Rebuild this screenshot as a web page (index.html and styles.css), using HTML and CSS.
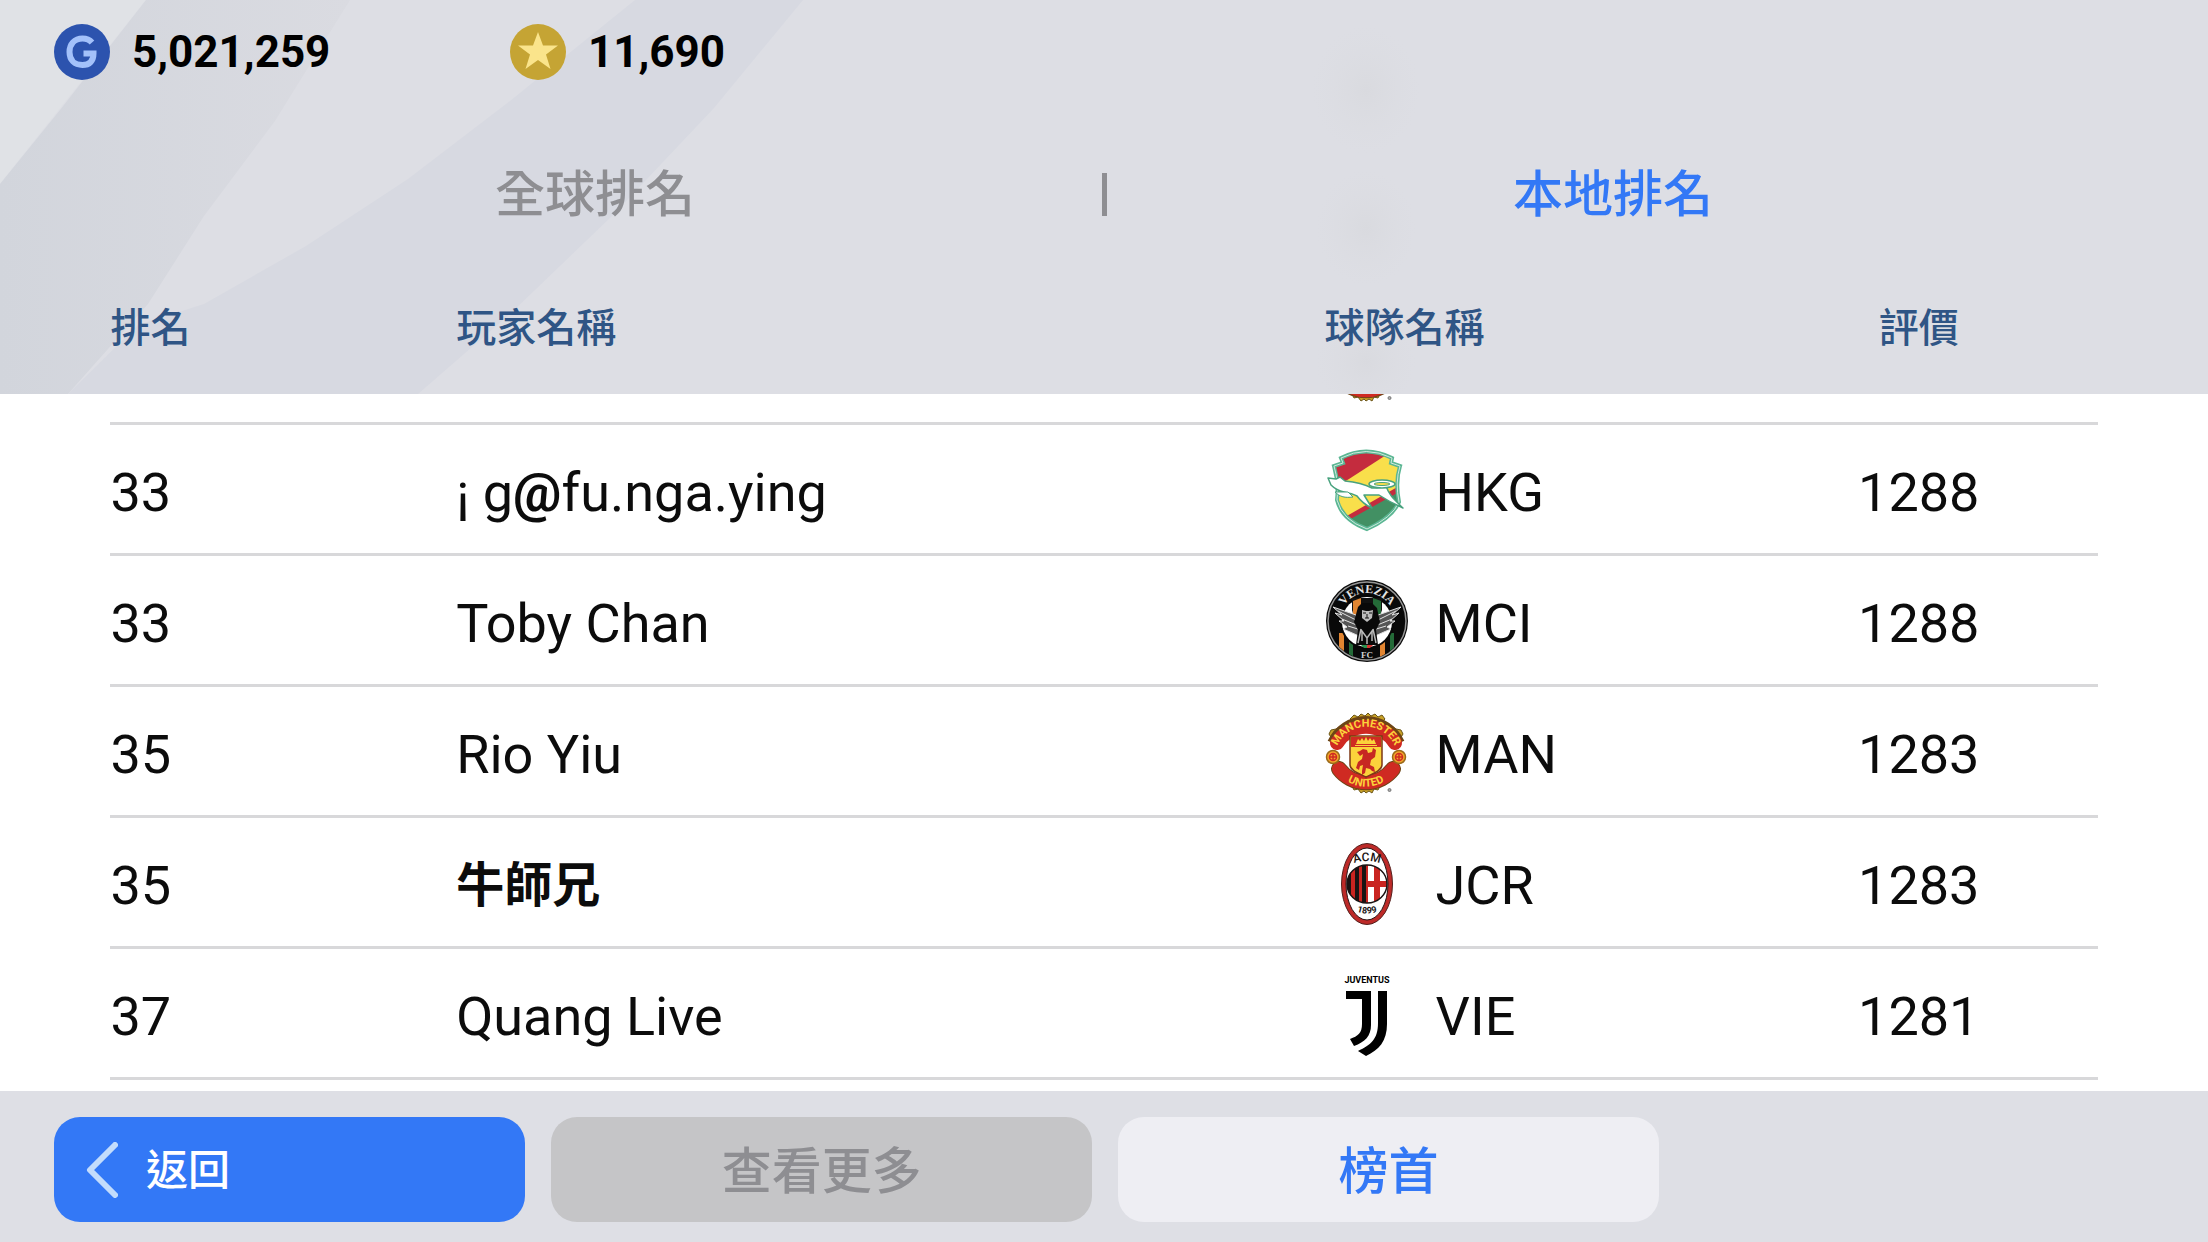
FILE: index.html
```html
<!DOCTYPE html>
<html lang="zh-Hant">

<head>
    <meta charset="utf-8">
    <meta name="viewport" content="width=device-width, initial-scale=1">
    <title>本地排名</title>
    <link rel="stylesheet" href="styles.css">
</head>

<body>
    <svg class="backdrop" viewBox="0 0 2208 394" preserveAspectRatio="xMinYMin slice" aria-hidden="true">
        <defs>
            <linearGradient id="band" x1="0" y1="0" x2="1" y2="0">
                <stop offset="0" stop-color="#d2d5dc" />
                <stop offset="1" stop-color="#dadbe1" />
            </linearGradient>
            <radialGradient id="ghost">
                <stop offset="0" stop-color="#d5d6da" stop-opacity=".5" />
                <stop offset="1" stop-color="#dadbdf" stop-opacity="0" />
            </radialGradient>
        </defs>
        <path fill="#dddee4" d="M0 0h2208v394H0z" />
        <path fill="#e0e2e6" d="M0 0h146L0 184z" />
        <path fill="url(#band)" d="M146 0H350L275 121 204 216 148 304 68 394H0V184L60 110z" />
        <path fill="#d7d9e1" d="M635 0H803L714 108 612 216 510 314 418 394H68L138 325 204 304 306 246 408 179 510 101z" />
        <ellipse cx="1366" cy="90" rx="54" ry="64" fill="url(#ghost)" />
        <ellipse cx="1366" cy="228" rx="50" ry="58" fill="url(#ghost)" />
        <ellipse cx="1366" cy="362" rx="50" ry="50" fill="url(#ghost)" />
    </svg>

    <svg class="sprites" aria-hidden="true">
        <symbol id="crest-united" viewBox="0 0 84 84">
            <g fill="#c9a227" stroke="#6b5518">
                <path d="M25 9l4-4 4 2 3-3 4 2 3-3 3 3 4-2 3 3 4-2 3 4-4 4H29z" />
                <path d="M4 24l2-4 5-1 3-2-1 6-6 6zM78 24l-2-4-5-1-3-2 1 6 6 6z" />
                <path d="M26 74l3 6 4-1 3 4 3-2 2 2 3-2 3 2 2-4 4 1 3-6z" />
            </g>
            <path fill="#fff" d="M41 12a30 30 0 1 0 .1 0z" />
            <path fill="none" stroke="#6d4515" stroke-width="16" d="M10 34A34 34 0 0 1 72 34" />
            <path fill="none" stroke="#cf2a22" stroke-width="14" stroke-linecap="round" d="M12 33A34 34 0 0 1 70 33" />
            <path fill="none" stroke="#6d4515" stroke-width="16" stroke-linecap="round" d="M14 59A34 34 0 0 0 68 59" />
            <path fill="none" stroke="#cf2a22" stroke-width="14" stroke-linecap="round" d="M14 59A34 34 0 0 0 68 59" />
            <g stroke="#9b6a1a" stroke-width="1.5" fill="#f4a52c">
                <circle cx="8" cy="47" r="6.5" />
                <circle cx="74" cy="47" r="6.5" />
            </g>
            <g fill="none" stroke="#cf2a22" stroke-width="1.5">
                <circle cx="8" cy="47" r="3.5" />
                <circle cx="74" cy="47" r="3.5" />
                <path d="M5 47h6M71 47h6M8 44v6M74 44v6" />
            </g>
            <path fill="#fbd33b" stroke="#7d3916" stroke-width="1.5" d="M25 26h32v29c0 5-8 8-16 12-8-4-16-7-16-12z" />
            <path fill="#cf2a22" d="M26 27h30v10H26z" />
            <path fill="#fbd33b" d="M31 34l2-5 2 2 2-3 2 3 2-4 2 4 2-3 2 3 2-2 2 5zM30 35h22v1H30z" />
            <path fill="#c72822" d="M35 41l3-2 4 1 1 3 4-1 1-4 3 2-1 7-4 3-1 5 4 2 1 5-3-1-2-2-4-1-1 5-3 2 0-4 1-6-3 1-1 4-3-2 2-6 4-3 1-5-3 2-3-4z" />
            <circle cx="64.5" cy="80" r="1.5" fill="#aaa" stroke="#777" />
        </symbol>
    </svg>

    <header class="header">
        <div class="wallet">
            <div class="balance">
                <svg class="coin" viewBox="0 0 56 56" role="img" aria-label="GP">
                    <circle cx="28" cy="28" r="28" fill="#2c53ae" />
                    <path fill="none" stroke="#a3c1fa" stroke-width="6" d="M38 18.5C35 15 32 14.500 28.500 14.500C20.500 14.500 15.500 20 15.500 28S20.500 41 28.500 41C35.500 41 39.500 37 39.500 29.500H29.500" />
                </svg>
                <span>5,021,259</span>
            </div>
            <div class="balance">
                <svg class="coin" viewBox="0 0 56 56" role="img" aria-label="Coins">
                    <circle cx="28" cy="28" r="28" fill="#c5a434" />
                    <path fill="#fae48b" d="M28 8l5 13.500h15L36 30.500 40.500 45 28 36 15.500 45 20 30.500 8 21.500h15z" />
                </svg>
                <span>11,690</span>
            </div>
        </div>
        <nav class="tabs">
            <button class="tab" type="button">全球排名</button>
            <span class="tab-divider"></span>
            <button class="tab tab--active" type="button" aria-current="true">本地排名</button>
        </nav>
    </header>

    <main class="ranking">
        <table class="ranking-table">
            <thead>
                <tr>
                    <th class="col-rank" scope="col">排名</th>
                    <th class="col-player" scope="col">玩家名稱</th>
                    <th class="col-team" scope="col">球隊名稱</th>
                    <th class="col-rating" scope="col">評價</th>
                </tr>
            </thead>
            <tbody>
                <!-- row scrolled almost out of view under the header -->
                <tr class="row-peek">
                    <td></td>
                    <td></td>
                    <td>
                        <div class="peek"><svg class="crest"><use href="#crest-united" /></svg></div>
                    </td>
                    <td></td>
                </tr>
                <tr>
                    <td>33</td>
                    <td>¡ g<b>@</b>fu.nga.ying</td>
                    <td>
                        <div class="team">
                            <svg class="crest" viewBox="0 0 84 84" aria-hidden="true">
                                <defs>
                                    <clipPath id="shield">
                                        <path d="M16 10Q41 -3 67 10L66 15 75 18Q70 34 74 54Q67 70 42 81Q17 72 12 52Q14 35 9 18L18 15z" />
                                    </clipPath>
                                </defs>
                                <g clip-path="url(#shield)">
                                    <path fill="#f9df4b" d="M0 0h84v84H0z" />
                                    <path fill="#c42c3e" d="M0 0h72L24 31 0 45z" />
                                    <path fill="#c42c3e" d="M20 69L76 37v8L24 76z" />
                                    <path fill="#429063" d="M20 74L76 43v41H20z" />
                                </g>
                                <path fill="none" stroke="#5bb693" stroke-width="4" d="M16 10Q41 -3 67 10L66 15 75 18Q70 34 74 54Q67 70 42 81Q17 72 12 52Q14 35 9 18L18 15z" />
                                <path fill="none" stroke="#cfeadd" d="M16 10Q41 -3 67 10L66 15 75 18Q70 34 74 54Q67 70 42 81Q17 72 12 52Q14 35 9 18L18 15z" />
                                <path fill="#fff" stroke="#48a27e" stroke-width="1.5" stroke-linejoin="round" d="M3 30l8 1 4-2 5 4c10 1 19 3 27 7 6 0 10 0 14-2 3 9 8 13 17 22-9-4-18-9-24-13l-15 0 8 13c-7-3-12-8-15-12-4-2-8-3-13-4-5-1-9-3-13-7z" />
                                <ellipse cx="57" cy="36" rx="13" ry="4" fill="#fff" stroke="#48a27e" stroke-width="1.5" />
                                <ellipse cx="57" cy="36" rx="8" ry="1.5" fill="#f9df4b" stroke="#48a27e" />
                                <path fill="#fff" stroke="#48a27e" d="M10 44c5 5 10 6 18 5l-5-5z" />
                            </svg>
                            <span>HKG</span>
                        </div>
                    </td>
                    <td>1288</td>
                </tr>
                <tr>
                    <td>33</td>
                    <td>Toby Chan</td>
                    <td>
                        <div class="team">
                            <svg class="crest" viewBox="0 0 84 84" aria-hidden="true">
                                <defs>
                                    <clipPath id="disc">
                                        <circle cx="42" cy="42" r="38" />
                                    </clipPath>
                                    <path id="arc-venezia" d="M15 41A27 27 0 0 1 69 41" />
                                </defs>
                                <circle cx="42" cy="42" r="41" fill="#090909" />
                                <circle cx="42" cy="42" r="39" fill="none" stroke="#969696" stroke-width="1.5" />
                                <g clip-path="url(#disc)">
                                    <path fill="#e18531" d="M14 54h5v28h-5zM55 56h5v26h-5z" />
                                    <path fill="#246b38" d="M24 60h4v22h-4zM65 54h4v28h-4z" />
                                </g>
                                <circle cx="42" cy="43" r="27" fill="#070707" />
                                <circle cx="42" cy="43" r="25" fill="#fff" />
                                <path fill="#111" d="M27 19h30v12l-4 12-10 13-13-14-3-11z" />
                                <path fill="#e18531" d="M28 22l8-3v20h-8z" />
                                <path fill="#246b38" d="M48 19l8 3v17h-8z" />
                                <g fill="#555" stroke="#e2e2e2">
                                    <path d="M8 28l23 8 6 12-3 9-9-4-7-3 4-2-8-6 5 0-9-8 7 2z" />
                                    <path d="M76 28l-23 8-6 12 3 9 9-4 7-3-4-2 8-6-5 0 9-8-7 2z" />
                                    <path d="M13 32l20 10M17 40l17 7M23 47l13 4M71 32L51 42M67 40l-17 7M61 47l-13 4" />
                                </g>
                                <path fill="#090909" d="M33 28l4-4h10l5 5 3 14-4 8 2 15H31l2-15-4-8z" />
                                <path fill="#bcbcbc" d="M37 31l4 1h3l4-1-1 8-5 4-5-4z" />
                                <path stroke="#111" fill="none" d="M38 34h3M44 34h3M40 39h4M42 35v4" />
                                <path stroke="#b9b9b9" fill="none" stroke-width="1.5" d="M33 64l3-14M51 64l-3-14M37 62V52l5 7 5-7v10M42 59v6" />
                                <path fill="#d53732" d="M42 66h6l-3 3h-3z" />
                                <path fill="#2c9250" d="M36 66h6v3h-3z" />
                                <text class="crest-text crest-text--serif">
                                    <textPath href="#arc-venezia" startOffset="50%" text-anchor="middle">VENEZIA</textPath>
                                </text>
                                <text class="crest-text crest-text--club" x="42" y="79" text-anchor="middle">FC</text>
                            </svg>
                            <span>MCI</span>
                        </div>
                    </td>
                    <td>1288</td>
                </tr>
                <tr>
                    <td>35</td>
                    <td>Rio Yiu</td>
                    <td>
                        <div class="team">
                            <svg class="crest" viewBox="0 0 84 84" aria-hidden="true">
                                <use href="#crest-united" width="84" height="84" />
                                <path id="arc-manchester" fill="none" d="M11 40A31 31 0 0 1 71 40" />
                                <path id="arc-united" fill="none" d="M12 62A36 36 0 0 0 70 62" />
                                <text class="crest-text crest-text--gold">
                                    <textPath href="#arc-manchester" startOffset="50%" text-anchor="middle">MANCHESTER</textPath>
                                </text>
                                <text class="crest-text crest-text--gold">
                                    <textPath href="#arc-united" startOffset="50%" text-anchor="middle">UNITED</textPath>
                                </text>
                            </svg>
                            <span>MAN</span>
                        </div>
                    </td>
                    <td>1283</td>
                </tr>
                <tr>
                    <td>35</td>
                    <td class="name-han">牛師兄</td>
                    <td>
                        <div class="team">
                            <svg class="crest" viewBox="0 0 84 84" aria-hidden="true">
                                <defs>
                                    <clipPath id="inner">
                                        <ellipse cx="42" cy="43" rx="20" ry="19" />
                                    </clipPath>
                                </defs>
                                <ellipse cx="42" cy="43" rx="25.5" ry="40.5" fill="#bd2a28" stroke="#54201d" />
                                <ellipse cx="42" cy="43" rx="21" ry="36" fill="#fff" stroke="#2b1616" />
                                <g clip-path="url(#inner)">
                                    <path fill="#c92420" d="M20 22h44v44H20z" />
                                    <path fill="#191313" d="M22 22h4v44h-4zM30 22h4v44h-4zM37 22h4v44h-4z" />
                                    <path fill="#fff" d="M43 22h21v44H43z" />
                                    <path fill="#c92420" d="M49 22h6v44h-6zM43 40h21v6H43z" />
                                </g>
                                <ellipse cx="42" cy="43" rx="20" ry="19" fill="none" stroke="#1b1414" stroke-width="1.5" />
                                <path id="arc-acm" fill="none" d="M25 24Q42 16 59 24" />
                                <path id="arc-year" fill="none" d="M24 67Q42 78 60 67" />
                                <text class="crest-text crest-text--acm">
                                    <textPath href="#arc-acm" startOffset="50%" text-anchor="middle">ACM</textPath>
                                </text>
                                <text class="crest-text crest-text--year">
                                    <textPath href="#arc-year" startOffset="50%" text-anchor="middle">1899</textPath>
                                </text>
                            </svg>
                            <span>JCR</span>
                        </div>
                    </td>
                    <td>1283</td>
                </tr>
                <tr>
                    <td>37</td>
                    <td>Quang Live</td>
                    <td>
                        <div class="team">
                            <svg class="crest" viewBox="0 0 84 84" aria-hidden="true">
                                <text class="crest-text crest-text--juve" x="42" y="11" text-anchor="middle">JUVENTUS</text>
                                <path d="M21 19h25v34c0 11-6 17-17 21l-4-7c8-3 12-6 12-15V27H21z" />
                                <path d="M53 19h9v33c0 17-8 26-21 32l-8-5c13-6 20-12 20-28z" />
                            </svg>
                            <span>VIE</span>
                        </div>
                    </td>
                    <td>1281</td>
                </tr>
            </tbody>
        </table>
    </main>

    <footer class="footer">
        <button class="btn btn--back" type="button">
            <svg class="chevron" viewBox="0 0 32 56" aria-hidden="true">
                <path d="M29 3L4 28l25 25" />
            </svg>
            <span>返回</span>
        </button>
        <button class="btn btn--more" type="button" disabled>查看更多</button>
        <button class="btn btn--top" type="button">榜首</button>
    </footer>
</body>

</html>
```
FILE: styles.css
```css
:root {
    --blue: #3378f6;
    --navy: #2f5585;
    --grey: #8e8e92;
    --panel: #dedfe5;
    --line: #d8d8da;
}

* {
    box-sizing: border-box;
}

body {
    margin: 0;
    min-height: 100vh;
    display: flex;
    flex-direction: column;
    background: var(--panel);
    color: #0c0c0c;
    font-family: Roboto, "Noto Sans CJK TC", sans-serif;
}

button {
    border: 0;
    background: none;
    font-family: inherit;
    font-size: 50px;
    font-weight: 500;
    cursor: pointer;
}

.backdrop {
    position: absolute;
    top: 0;
    left: 0;
    width: 100%;
    height: 394px;
    z-index: -1;
}

.sprites {
    position: absolute;
    width: 0;
    height: 0;
}

/* header */

.wallet {
    display: flex;
    padding: 24px 54px 0;
}

.balance {
    display: flex;
    align-items: center;
    gap: 22px;
    width: 456px;
    color: #000;
    font-size: 44px;
    font-weight: 700;
    line-height: 56px;
}

.coin {
    width: 56px;
    height: 56px;
}

.tabs {
    display: flex;
    align-items: center;
    height: 140px;
    margin: 44px 0 26px;
    padding: 0 4%;
}

.tab {
    flex: 1;
    height: 100%;
    padding: 0 0 8px;
    color: var(--grey);
}

.tab--active {
    color: var(--blue);
}

.tab-divider {
    width: 5px;
    height: 43px;
    background: var(--grey);
}

/* ranking */

.ranking {
    flex: 1;
    padding: 0 5%;
    background: linear-gradient(transparent 104px, #fff 104px);
}

.ranking-table {
    width: 100%;
    table-layout: fixed;
    border-collapse: separate;
    border-spacing: 0;
}

.ranking-table th {
    height: 104px;
    padding: 0 0 26px;
    color: var(--navy);
    font-size: 40px;
    font-weight: 500;
    line-height: 78px;
    text-align: left;
}

.ranking-table td {
    height: 131px;
    padding: 7px 0 0;
    border-bottom: 3px solid var(--line);
    font-size: 54px;
    line-height: 64px;
}

.ranking-table td:last-child,
.ranking-table .col-rating {
    text-align: center;
}

.col-rank {
    width: 17.4%;
}

.col-player {
    width: 43.7%;
}

.col-team {
    width: 20.9%;
}

.ranking-table .row-peek td {
    height: 31px;
    padding: 0;
    vertical-align: top;
}

.peek {
    display: flex;
    align-items: flex-end;
    height: 8px;
    overflow: hidden;
}

.ranking-table .name-han {
    font-size: 48px;
    font-weight: 700;
}

.team {
    display: flex;
    align-items: center;
    gap: 27px;
}

.crest {
    flex: none;
    width: 84px;
    height: 84px;
}

.team .crest {
    margin-bottom: 5px;
}

.crest-text {
    font-family: Roboto, sans-serif;
    font-weight: 700;
}

.crest-text--gold {
    fill: #fbd33b;
    font-size: 11px;
}

.crest-text--serif {
    fill: #e4e4e4;
    font-family: "Liberation Serif", serif;
    font-size: 12px;
}

.crest-text--club {
    fill: #d0d0d0;
    font-family: "Liberation Serif", serif;
    font-size: 9px;
}

.crest-text--acm {
    fill: #1b1414;
    font-size: 12px;
    font-weight: 500;
}

.crest-text--year {
    fill: #1b1414;
    font-size: 9px;
}

.crest-text--juve {
    font-size: 9px;
}

/* footer */

.footer {
    display: flex;
    gap: 26px;
    padding: 26px 54px 20px;
    background: var(--panel);
}

.btn {
    width: 25.75%;
    height: 105px;
    padding: 0 32px 6px;
    border-radius: 26px;
}

.btn--back {
    display: flex;
    align-items: center;
    gap: 28px;
    width: 22.45%;
    background: var(--blue);
    color: #fff;
    font-size: 42px;
}

.btn--more {
    background: #c5c5c7;
    color: var(--grey);
    cursor: default;
}

.btn--top {
    background: #eeeef3;
    color: var(--blue);
}

.chevron {
    width: 32px;
    height: 56px;
    margin-top: 6px;
    fill: none;
    stroke: #c3dcfc;
    stroke-width: 6px;
    stroke-linecap: round;
    stroke-linejoin: round;
}
```
